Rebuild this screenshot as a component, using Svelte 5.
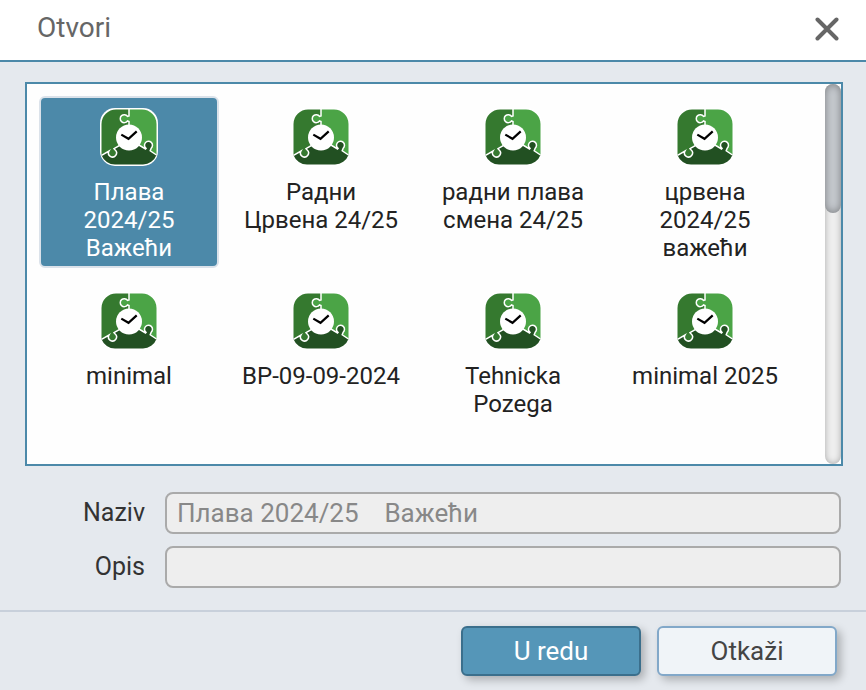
<script lang="ts">
  let items = [
    { id: 1, title: "Плава 2024/25    Важећи" },
    { id: 2, title: "Радни Црвена\u00a024/25" },
    { id: 3, title: "радни плава смена 24/25" },
    { id: 4, title: "црвена 2024/25 важећи" },
    { id: 5, title: "minimal" },
    { id: 6, title: "BP-09-09-2024" },
    { id: 7, title: "Tehnicka Pozega" },
    { id: 8, title: "minimal 2025" },
  ];

  let selectedId = $state(1);
  let description = $state("");
  let selectedTitle = $derived(items.find((item) => item.id === selectedId)?.title ?? "");
</script>

<div class="dialog">
  <header>
    <h1>Otvori</h1>
    <button class="close" type="button" aria-label="Zatvori">
      <svg viewBox="0 0 24 24" width="24" height="24">
        <path d="M2.500 2.500 21.500 21.500M21.500 2.500 2.500 21.500" fill="none" stroke="#666" stroke-width="4" stroke-linecap="round" />
      </svg>
    </button>
  </header>

  <main>
    <div class="list">
      <div class="grid">
        {#each items as item (item.id)}
          <button
            class="item"
            class:selected={item.id === selectedId}
            type="button"
            onclick={() => (selectedId = item.id)}
          >
            <svg class="icon" viewBox="0 0 58 58" aria-hidden="true">
              <rect width="58" height="58" rx="15" fill="#fff" />
              <!-- left piece, with its knob going down -->
              <path
                d="M29 1.5H16A14.5 14.5 0 0 0 1.5 16V47.3L9 43A4 4 0 1 0 15.2 42L14 40.7 29 32Z"
                fill="#35792f"
              />
              <!-- right piece, with its knob going left -->
              <path
                d="M29 1.5H42A14.5 14.5 0 0 1 56.5 16V47L29 32V13.5L27.5 13A4 4 0 1 1 27.5 8.3L29 8Z"
                fill="#4ba446"
              />
              <!-- bottom piece, with its knob going up -->
              <path
                d="M1.5 47.3 9 43A4 4 0 1 0 15.2 42L14 40.7 29 32 45.5 41 46 40.4A4 4 0 1 1 51.2 40.2L50.2 42.8 56.5 47A14.5 14.5 0 0 1 43 56.5H15A14.5 14.5 0 0 1 1.5 47.3Z"
                fill="#225022"
              />
              <path
                d="M29 1V8L27.5 8.3A4 4 0 1 0 27.5 13L29 13.5V32L14 40.7 15.2 42A4 4 0 1 1 9 43L1.5 47.3M29 31 45.5 41 46 40.4A4 4 0 1 1 51.2 40.2L50.2 42.8 56.5 47"
                fill="none"
                stroke="#fff"
                stroke-width="1.5"
              />
              <circle cx="29" cy="29.5" r="13" fill="#fff" />
              <path d="M21.3 26.6 28.5 30.8 36.7 23.4" fill="none" stroke="#000" stroke-width="2.2" />
            </svg>
            <span>{item.title}</span>
          </button>
        {/each}
      </div>
      <div class="track"><div class="thumb"></div></div>
    </div>

    <form>
      <label for="name">Naziv</label>
      <input id="name" type="text" value={selectedTitle} disabled />
      <label for="description">Opis</label>
      <input id="description" type="text" value={description} disabled />
    </form>
  </main>

  <footer>
    <button class="action primary" type="button">U redu</button>
    <button class="action" type="button">Otkaži</button>
  </footer>
</div>

<style>
  :global(body) {
    margin: 0;
    background: #e5e9ee;
  }

  .dialog {
    font-family: Roboto, sans-serif;
    color: #333;
    background: #e5e9ee;
  }

  button,
  input {
    box-sizing: border-box;
    font-family: inherit;
    margin: 0;
  }

  header {
    display: flex;
    align-items: center;
    justify-content: space-between;
    padding: 12px 27px 14px 37px;
    background: #fff;
    border-bottom: 2px solid #4c89a9;
  }

  h1 {
    margin: 0 0 2px;
    font-size: 28px;
    font-weight: 400;
    line-height: 32px;
    color: #666;
  }

  .close {
    display: flex;
    padding: 0;
    border: 0;
    background: none;
    cursor: pointer;
  }

  main {
    padding: 20px 23px 22px 25px;
  }

  .list {
    display: flex;
    border: 2px solid #4c89a9;
    background: #fefefe;
  }

  .grid {
    flex: 1;
    display: grid;
    grid-template-columns: repeat(auto-fill, 180px);
    align-items: start;
    gap: 12px;
    padding: 12px;
  }

  .item {
    display: flex;
    flex-direction: column;
    align-items: center;
    gap: 12px;
    min-height: 172px;
    padding: 10px 6px 4px;
    border: 2px solid transparent;
    border-radius: 6px;
    background: none;
    font-size: 24px;
    line-height: 28px;
    color: #222;
    cursor: pointer;
  }
  .item.selected {
    border-color: #dbe2ea;
    background: #4c89a9;
    color: #fff;
  }

  .icon {
    width: 58px;
    height: 58px;
  }

  .track {
    width: 16px;
    border-radius: 8px;
    background: #eee;
    box-shadow: inset 0 0 6px rgba(0, 0, 0, 0.3);
  }

  .thumb {
    height: 34%;
    border-radius: 8px;
    background: #c6cacf;
    box-shadow: inset 0 0 8px rgba(0, 0, 0, 0.4);
  }

  form {
    display: grid;
    grid-template-columns: 120px 1fr;
    align-items: center;
    gap: 12px 20px;
    padding: 26px 2px 0 0;
  }

  label {
    font-size: 25px;
    line-height: 28px;
    text-align: right;
  }

  input {
    width: 100%;
    height: 42px;
    padding: 0 10px;
    border: 2px solid #aaa;
    border-radius: 8px;
    background: #eee;
    font-size: 26px;
    color: #888;
  }

  footer {
    display: flex;
    justify-content: flex-end;
    gap: 16px;
    padding: 14px 29px 14px;
    border-top: 2px solid #c8d0db;
  }

  .action {
    width: 180px;
    height: 50px;
    padding: 0;
    border: 2px solid #82a8c9;
    border-radius: 6px;
    background: #f0f4f8;
    box-shadow: 4px 4px 8px rgba(0, 0, 0, 0.25);
    font-size: 26px;
    color: #444;
    cursor: pointer;
  }
  .action.primary {
    border-color: #3b6f8c;
    background: #5596b8;
    color: #fff;
  }
</style>
